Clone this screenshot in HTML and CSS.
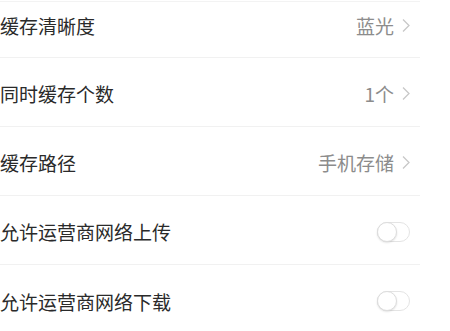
FILE: index.html
```html
<!DOCTYPE html>
<html lang="zh-CN">

<head>
    <meta charset="UTF-8">
    <meta name="viewport" content="width=device-width, initial-scale=1.0">
    <title>缓存设置</title>
    <link rel="stylesheet" href="styles.css">
</head>

<body>
    <ul class="setting_list">
        <li class="setting_row first_row">
            <span class="label">缓存清晰度</span>
            <span class="value">蓝光<svg class="arrow" viewBox="0 0 8 14"><polyline points="1,1 7,7 1,13"></polyline></svg></span>
        </li>
        <li class="setting_row">
            <span class="label">同时缓存个数</span>
            <span class="value">1个<svg class="arrow" viewBox="0 0 8 14"><polyline points="1,1 7,7 1,13"></polyline></svg></span>
        </li>
        <li class="setting_row">
            <span class="label">缓存路径</span>
            <span class="value">手机存储<svg class="arrow" viewBox="0 0 8 14"><polyline points="1,1 7,7 1,13"></polyline></svg></span>
        </li>
        <li class="setting_row">
            <span class="label">允许运营商网络上传</span>
            <span class="switch"><i class="knob"></i></span>
        </li>
        <li class="setting_row last_row">
            <span class="label">允许运营商网络下载</span>
            <span class="switch"><i class="knob"></i></span>
        </li>
    </ul>
</body>

</html>
```

FILE: styles.css
```css
* {
    margin: 0;
    padding: 0;
}

body {
    width: 450px;
    height: 331px;
    overflow: hidden;
    background-color: #fff;
    font-family: "Noto Sans CJK SC", "Noto Sans", sans-serif;
}

.setting_list {
    list-style: none;
    width: 420px;
    margin-top: 1px;
    border-top: 1px solid #f3f3f3;
}

.setting_row {
    display: flex;
    align-items: center;
    justify-content: space-between;
    box-sizing: border-box;
    height: 69px;
    padding: 3px 10px 0 0;
    border-bottom: 1px solid #f1f1f1;
}

.first_row {
    height: 56px;
    padding: 0 10px 8px 0;
}

.last_row {
    border-bottom: none;
}

.label {
    font-size: 19px;
    color: #2a2a2a;
}

.value {
    display: flex;
    align-items: center;
    font-size: 19px;
    color: #8c8c8c;
}

.arrow {
    width: 8px;
    height: 15px;
    margin-left: 8px;
    fill: none;
    stroke: #c8c8c8;
    stroke-width: 1.3;
}

.switch {
    position: relative;
    box-sizing: border-box;
    width: 33px;
    height: 20px;
    border: 1px solid #e4e4e4;
    border-radius: 10px;
    background-color: #fff;
}

.knob {
    position: absolute;
    left: -1px;
    top: -1px;
    box-sizing: border-box;
    width: 20px;
    height: 20px;
    border: 1px solid #dddddd;
    border-radius: 50%;
    background-color: #fff;
    box-shadow: 0 1px 2px rgba(0, 0, 0, 0.12);
}
```
